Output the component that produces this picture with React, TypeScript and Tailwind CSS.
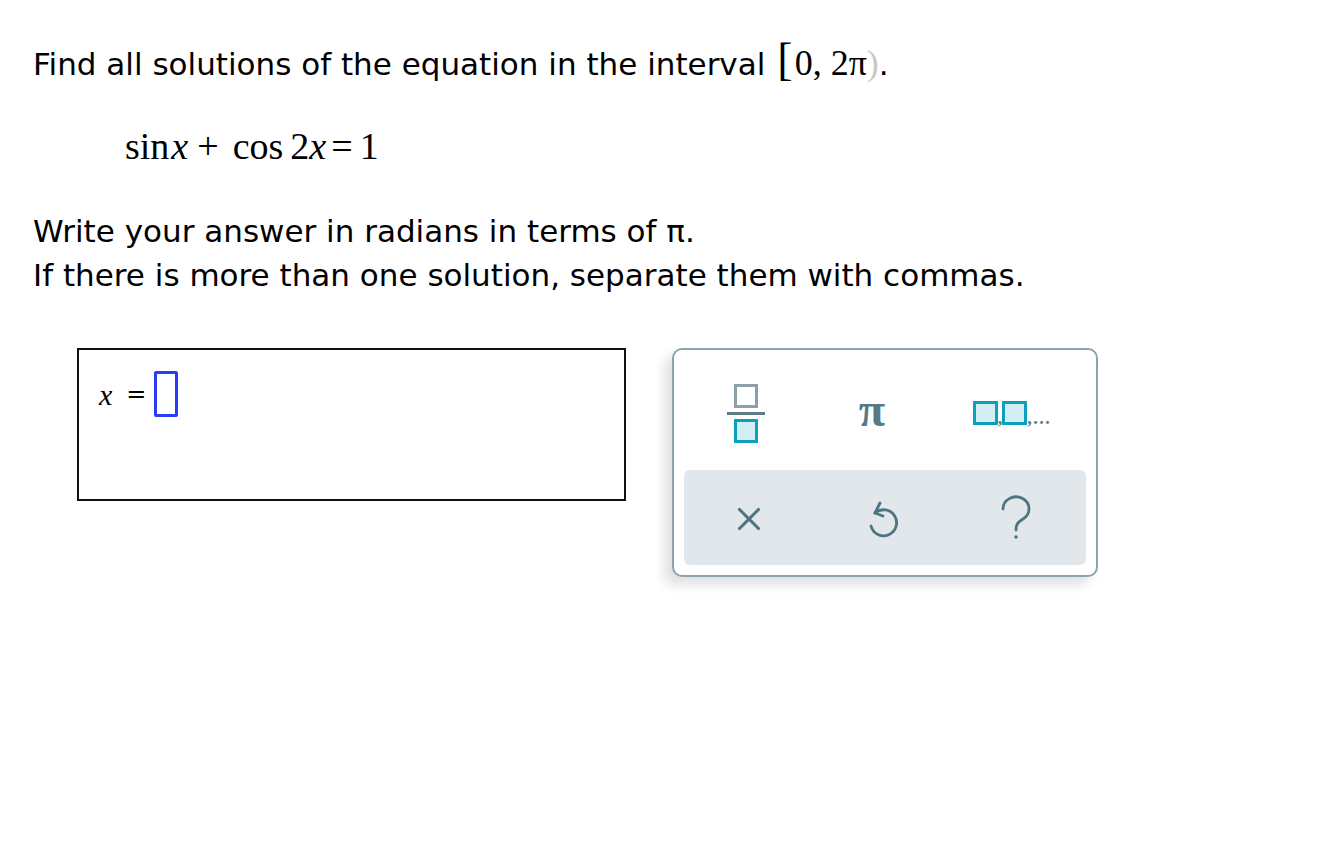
import { X } from "lucide-react";

const serif = { fontFamily: '"Liberation Serif", "Times New Roman", serif' };

function Box({ className = "" }: { className?: string }) {
  return <span className={`inline-block border-[3px] border-[#0ba0bb] bg-[#d3eff5] ${className}`} />;
}

function Keypad() {
  return (
    <div className="w-[426px] h-[229px] rounded-[10px] border-2 border-[#8ea3ab] bg-white p-[10px] shadow-[-8px_8px_12px_rgba(0,0,0,0.12)] flex flex-col">
      <div className="grid grid-cols-3 h-[110px] items-center text-[#4d7481]">
        <div className="flex justify-center -ml-[10px] -mt-[4px]">
          <div className="flex flex-col items-center">
            <span className="inline-block w-[24px] h-[24px] border-[3px] border-[#8ba0a8]" />
            <span className="block w-[38px] h-[3px] bg-[#5b7b86] my-[4px]" />
            <Box className="w-[24px] h-[24px]" />
          </div>
        </div>
        <div className="flex justify-center -ml-[26px] -mt-[10px]">
          <span className="text-[48px] leading-none font-bold text-[#557985]" style={serif}>π</span>
        </div>
        <div className="flex justify-center items-end -ml-[14px] -mt-[4px]">
          <Box className="w-[25px] h-[24px]" />
          <span className="text-[#5b7b86] text-[18px] leading-[14px] font-bold" style={serif}>,</span>
          <Box className="w-[25px] h-[24px]" />
          <span className="text-[#5b7b86] text-[18px] leading-[14px] font-bold tracking-[1.5px]" style={serif}>,...</span>
        </div>
      </div>
      <div className="flex-1 rounded-[6px] bg-[#e1e7ea] grid grid-cols-3 items-center text-[#4d7481]">
        <div className="flex justify-center -ml-[4px] mt-[2px]">
          <X size={38} strokeWidth={2} />
        </div>
        <div className="flex justify-center -ml-[4px]">
          <svg width="32" height="42" viewBox="0 0 32 42" fill="none" stroke="currentColor" strokeWidth="2.8" strokeLinecap="round" strokeLinejoin="round">
            <path d="M8 16 A13 13 0 1 1 4 29" />
            <path d="M13 6 L8 16 L16 19" />
          </svg>
        </div>
        <div className="flex justify-center -ml-[6px]">
          <svg width="32" height="46" viewBox="0 0 32 46" fill="none" stroke="currentColor" strokeWidth="2.8" strokeLinecap="round">
            <path d="M3 14 A13 12 0 1 1 23 24 C18 27 16 29 16 35" />
            <circle cx="16" cy="42" r="1.8" fill="currentColor" stroke="none" />
          </svg>
        </div>
      </div>
    </div>
  );
}

export default function App() {
  return (
    <div className="min-h-[864px] w-[1328px] bg-white text-black" style={{ fontFamily: '"DejaVu Sans", Verdana, sans-serif' }}>
      <div className="pl-[33px] pt-[35px]">
        <p className="text-[31px] leading-[50px] flex items-baseline">
          Find all solutions of the equation in the interval
          <span className="ml-[12px] text-[36px]" style={serif}>
            <span className="text-[46px] font-light mr-[2px]">[</span>0, 2π<span className="text-[#c8c8c8]">)</span>
          </span>
          <span>.</span>
        </p>
        <div className="pl-[92px] mt-[37px] text-[38px] leading-[40px]" style={serif}>
          sin<span className="ml-[2px]"><i>x</i></span>
          <span className="mx-[9px]">+</span>
          <span className="ml-[5px]">cos</span>
          <span className="ml-[7px]">2</span><i>x</i>
          <span className="mx-[5px]">=</span>
          <span className="ml-[2px]">1</span>
        </div>
        <p className="mt-[43px] text-[31px] leading-[44px]">Write your answer in radians in terms of π.</p>
        <p className="text-[31px] leading-[44px]">If there is more than one solution, separate them with commas.</p>
      </div>

      <div className="flex items-start mt-[51px] pl-[77px] gap-[46px]">
        <div className="w-[549px] h-[153px] border-2 border-[#111] pl-[20px] pt-[21px]">
          <div className="flex items-center">
            <span className="text-[30px] italic" style={serif}>x</span>
            <span className="text-[24px] ml-[14px]">=</span>
            <span className="ml-[8px] inline-block w-[24px] h-[46px] border-[3px] border-[#2a3cf5] rounded-[2px]" />
          </div>
        </div>
        <Keypad />
      </div>
    </div>
  );
}
